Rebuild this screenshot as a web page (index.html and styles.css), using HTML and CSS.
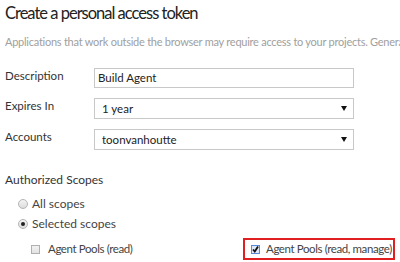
FILE: index.html
```html
<!DOCTYPE html>
<html>
<head>
<meta charset="utf-8">
<link rel="stylesheet" href="styles.css">
</head>
<body>
<div class="page">
  <h1 class="title">Create a personal access token</h1>
  <p class="intro">Applications that work outside the browser may require access to your projects. Generate a token for each application.</p>
  <div class="form">
    <div class="row">
      <span class="label">Description</span>
      <div class="field input">Build Agent</div>
    </div>
    <div class="row">
      <span class="label">Expires In</span>
      <div class="field select"><span>1 year</span><span class="arrow"></span></div>
    </div>
    <div class="row">
      <span class="label">Accounts</span>
      <div class="field select"><span>toonvanhoutte</span><span class="arrow"></span></div>
    </div>
  </div>
  <div class="scopes-label">Authorized Scopes</div>
  <div class="radios">
    <div class="radio-row"><span class="radio"></span><span>All scopes</span></div>
    <div class="radio-row"><span class="radio on"></span><span>Selected scopes</span></div>
  </div>
  <div class="checks">
    <div class="check-row plain"><span class="box"></span><span>Agent Pools (read)</span></div>
    <div class="check-row highlight"><span class="box checked"><svg width="9" height="9" viewBox="0 0 9 9"><path d="M2 4.5 L3.8 6.6 L7 1.6" fill="none" stroke="#111" stroke-width="1.8"/></svg></span><span>Agent Pools (read, manage)</span></div>
  </div>
</div>
</body>
</html>
```
FILE: styles.css
```css
html, body {
  margin: 0;
  padding: 0;
  background: #fff;
}
body {
  width: 400px;
  height: 262px;
  overflow: hidden;
  font-family: Lato, "Noto Sans", sans-serif;
  color: #333;
}
.page {
  padding: 0 0 0 5px;
}
.title {
  margin: 0;
  padding-top: 2px;
  font-size: 16.5px;
  font-weight: 400;
  line-height: 22px;
  letter-spacing: -1px;
  color: #222;
  white-space: nowrap;
}
.intro {
  margin: 11px 0 0 0;
  font-size: 11px;
  line-height: 14px;
  letter-spacing: -0.25px;
  color: #a0a0a0;
  white-space: nowrap;
  overflow: hidden;
}
.form {
  margin-top: 19px;
  display: flex;
  flex-direction: column;
  gap: 10px;
}
.row {
  display: flex;
  align-items: flex-start;
}
.label {
  width: 89px;
  font-size: 11.5px;
  line-height: 16px;
  color: #333;
}
.field {
  box-sizing: border-box;
  width: 260px;
  height: 20px;
  border: 1px solid #c8c8c8;
  font-size: 11.5px;
  line-height: 18px;
  color: #222;
  display: flex;
  align-items: center;
}
.input {
  padding-left: 3px;
}
.select {
  padding-left: 7px;
  padding-right: 6px;
  justify-content: space-between;
  height: 21px;
}
.arrow {
  width: 0;
  height: 0;
  border-left: 3px solid transparent;
  border-right: 3px solid transparent;
  border-top: 5px solid #111;
}
.scopes-label {
  margin-top: 22px;
  font-size: 12px;
  line-height: 16px;
  color: #333;
}
.radios {
  margin-top: 8px;
  padding-left: 13px;
  display: flex;
  flex-direction: column;
  gap: 4px;
}
.radio-row, .check-row {
  display: flex;
  align-items: center;
  gap: 4px;
  font-size: 12px;
  line-height: 16px;
  color: #444;
  white-space: nowrap;
}
.radio {
  box-sizing: border-box;
  width: 10px;
  height: 10px;
  border-radius: 50%;
  border: 1px solid #b5b5b5;
  background: linear-gradient(#f4f4f4, #dcdcdc);
  position: relative;
}
.radio.on::after {
  content: "";
  position: absolute;
  left: 2px;
  top: 2px;
  width: 4px;
  height: 4px;
  border-radius: 50%;
  background: #222;
}
.checks {
  margin-top: 6px;
  padding-left: 26px;
  display: flex;
  align-items: center;
}
.check-row {
  gap: 8px;
  flex: none;
  font-size: 11.5px;
  letter-spacing: -0.4px;
}
.plain {
  width: 212px;
}
.highlight {
  box-sizing: border-box;
  border: 2px solid #e02020;
  height: 22px;
  padding-left: 6px;
  padding-right: 1px;
  gap: 6px;
}
.box {
  box-sizing: border-box;
  width: 9px;
  height: 9px;
  border: 1px solid #b0b0b0;
  background: linear-gradient(#f2f2f2, #e2e2e2);
  display: flex;
}
.box.checked {
  border-color: #5a8ad6;
  background: #dde8f8;
}
.box svg {
  margin: -1px;
}
```
